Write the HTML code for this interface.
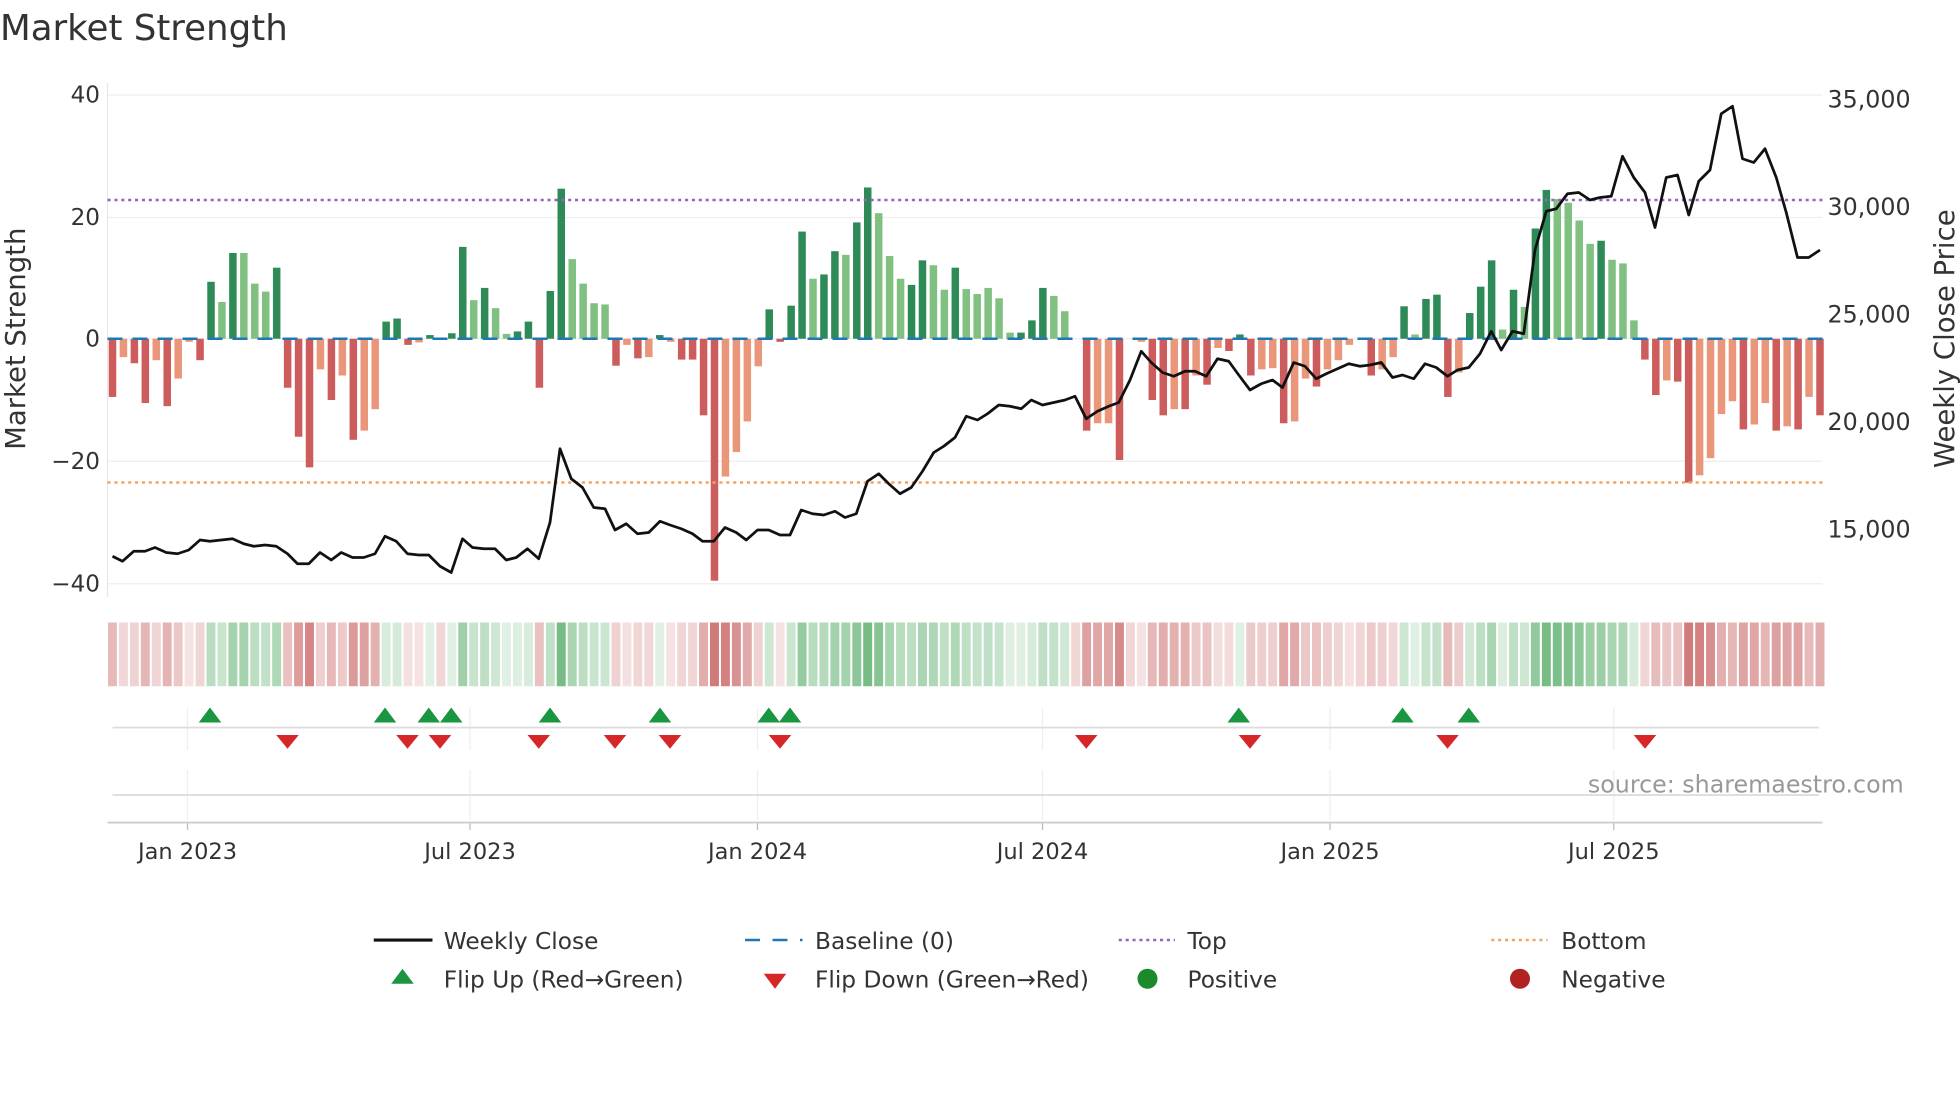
<!DOCTYPE html>
<html><head><meta charset="utf-8"><style>
html,body{margin:0;padding:0;background:#fff;width:1960px;height:1102px;overflow:hidden}
svg{display:block}
text{font-family:"DejaVu Sans","Liberation Sans",sans-serif;fill:#333}
</style></head><body>
<svg id="s" width="1960" height="1102" viewBox="0 0 1568 881.6" xmlns="http://www.w3.org/2000/svg">
<text x="0" y="32" font-size="28.5">Market Strength</text>
<g id="grid"></g>
<line x1="86" y1="66" x2="86" y2="478" stroke="#e6e6e6" stroke-width="1"/>
<g font-size="18.5" text-anchor="end">
<text x="80" y="82">40</text><text x="80" y="180">20</text><text x="80" y="277">0</text><text x="80" y="375">−20</text><text x="80" y="473">−40</text>
</g>
<g font-size="19" text-anchor="start">
<text x="1462" y="86">35,000</text><text x="1462" y="172">30,000</text><text x="1462" y="258">25,000</text><text x="1462" y="344">20,000</text><text x="1462" y="430">15,000</text>
</g>
<text font-size="22" text-anchor="middle" transform="translate(20,271) rotate(-90)">Market Strength</text>
<text font-size="22" text-anchor="middle" transform="translate(1563,271) rotate(-90)">Weekly Close Price</text>
<g id="bars"></g>
<line x1="86" y1="160" x2="1458" y2="160" stroke="#9467bd" stroke-width="2" stroke-dasharray="2.5,3"/>
<line x1="86" y1="386" x2="1458" y2="386" stroke="#f4a460" stroke-width="2" stroke-dasharray="2.5,3"/>
<line x1="86" y1="271" x2="1458" y2="271" stroke="#1f77b4" stroke-width="2" stroke-dasharray="12,8"/>
<polyline id="price" fill="none" stroke="#111" stroke-width="2.2" stroke-linejoin="round"/>
<g id="heat"></g>
<g id="vg" stroke="#eee" stroke-width="1"></g>
<line x1="90" y1="582" x2="1455" y2="582" stroke="#ddd" stroke-width="1.5"/>
<line x1="90" y1="636" x2="1455" y2="636" stroke="#ddd" stroke-width="1.5"/>
<line x1="86" y1="658" x2="1458" y2="658" stroke="#ccc" stroke-width="1.5"/>
<g id="mk"></g>
<text x="1523" y="634" font-size="19" text-anchor="end" style="fill:#999">source: sharemaestro.com</text>
<g font-size="18" text-anchor="middle">
<text x="150" y="687">Jan 2023</text><text x="376" y="687">Jul 2023</text><text x="606" y="687">Jan 2024</text><text x="834" y="687">Jul 2024</text><text x="1064" y="687">Jan 2025</text><text x="1291" y="687">Jul 2025</text>
</g>
<g font-size="18.6">
<line x1="299" y1="752" x2="346" y2="752" stroke="#111" stroke-width="2.5"/><text x="355" y="759">Weekly Close</text>
<line x1="596" y1="752" x2="642" y2="752" stroke="#1f77b4" stroke-width="2" stroke-dasharray="12,10"/><text x="652" y="759">Baseline (0)</text>
<line x1="895" y1="752" x2="940" y2="752" stroke="#9467bd" stroke-width="2" stroke-dasharray="2.5,3"/><text x="950" y="759">Top</text>
<line x1="1193" y1="752" x2="1238" y2="752" stroke="#f4a460" stroke-width="2" stroke-dasharray="2.5,3"/><text x="1249" y="759">Bottom</text>
<polygon points="313,787 322,775 331,787" fill="#1a9641"/><text x="355" y="790">Flip Up (Red→Green)</text>
<polygon points="611,779 629,779 620,791" fill="#d62728"/><text x="652" y="790">Flip Down (Green→Red)</text>
<circle cx="918" cy="783" r="8" fill="#1a8a2a"/><text x="950" y="790">Positive</text>
<circle cx="1216" cy="783" r="8" fill="#b22222"/><text x="1249" y="790">Negative</text>
</g>
</svg>
<script>
var NS="http://www.w3.org/2000/svg";
function el(t,a,p){var e=document.createElementNS(NS,t);for(var k in a)e.setAttribute(k,a[k]);document.getElementById(p).appendChild(e);return e;}
[76,174,271,369,467].forEach(function(y){el("line",{x1:86,y1:y,x2:1458,y2:y,stroke:"#eee","stroke-width":1},"grid")});
var B="-9.5d,-3l,-4d,-10.5d,-3.5l,-11d,-6.5l,-0.5l,-3.5d,9.3d,6l,14d,14l,9l,7.7l,11.6d,-8d,-16d,-21d,-5l,-10d,-6l,-16.5d,-15l,-11.5l,2.8d,3.3d,-1d,-0.6l,0.6d,0l,0.9d,15d,6.3l,8.3d,5l,0.8l,1.2d,2.8d,-8d,7.8d,24.5d,13l,9l,5.8l,5.6l,-4.4d,-1l,-3.2d,-3l,0.6d,-0.5l,-3.4d,-3.4d,-12.5d,-39.5d,-22.5l,-18.5l,-13.5l,-4.5l,4.8d,-0.5d,5.4d,17.5d,9.8l,10.5d,14.3d,13.7l,19d,24.7d,20.5l,13.5l,9.8l,8.8d,12.8d,12l,8l,11.6d,8.1l,7.3l,8.3l,6.6l,1l,1d,3d,8.3d,7l,4.5l,0l,-15d,-13.8l,-13.8l,-19.8d,0l,-0.5l,-10d,-12.5d,-11.5l,-11.5d,-6l,-7.5d,-1.5l,-2d,0.7d,-6d,-5l,-4.8l,-13.8d,-13.5l,-6.5l,-7.8d,-5l,-3.5l,-1l,0l,-6d,-5l,-3l,5.3d,0.7l,6.5d,7.2d,-9.5d,-5.5l,4.2d,8.5d,12.8d,1.5l,8d,5.2l,18d,24.3d,22.8l,22.2l,19.3l,15.5l,16d,12.9l,12.3l,3l,-3.4d,-9.2d,-6.8l,-7d,-23.5d,-22.3l,-19.5l,-12.3l,-10.2l,-14.8d,-14l,-10.5l,-15d,-14.3l,-14.8d,-9.5l,-12.5d".split(",");
var dx=(1456-90)/156;
B.forEach(function(s,i){var v=parseFloat(s),d=s.slice(-1)=="d",x=90+i*dx;
 var c=v>=0?(d?"#2e8b57":"#80c080"):(d?"#cd5c5c":"#e9967a");
 var y0=271,y1=271-v*4.9;
 if(Math.abs(v)>0.05)el("rect",{x:x-3,y:Math.min(y0,y1),width:6,height:Math.abs(y1-y0),fill:c},"bars");
 var m=Math.min(1,0.2+Math.abs(v)/30);
 var hc=v>0?"rgba(60,160,80,"+(m*0.7)+")":"rgba(190,70,70,"+(m*0.72)+")";
 if(v==0)hc="rgba(190,70,70,0.22)";
 el("rect",{x:x-3.6,y:498,width:dx-1.6,height:51,fill:hc},"heat");
});
var P="90:445,98:449,107:441,116:441,124:438,133:442,142:443,151:440,160:432,168:433,177:432,186:431,195:435,203:437,212:436,221:437,230:443,238:451,247:451,256:442,265:448,273:442,282:446,291:446,300:443,308:429,317:433,326:443,335:444,343:444,352:453,361:458,370:431,378:438,387:439,396:439,405:448,413:446,422:439,431:447,440:418,448:359,457:383,466:390,475:406,484:407,492:424,501:419,510:427,519:426,528:417,536:420,545:423,554:427,562:433,571:433,580:422,589:426,597:432,606:424,615:424,624:428,632:428,641:408,650:411,659:412,668:409,676:414,685:411,694:385,703:379,711:387,720:395,729:390,738:377,747:362,755:357,764:350,773:333,782:336,790:331,799:324,808:325,817:327,825:320,834:324,843:322,852:320,860:317,869:335,878:329,887:325,895:322,904:304,913:281,921:290,930:298,939:301,948:297,956:297,965:301,974:287,983:289,991:300,1000:312,1009:307,1018:304,1026:310,1035:290,1044:293,1053:303,1061:299,1070:295,1079:291,1088:293,1096:292,1105:290,1114:302,1122:300,1131:303,1140:291,1149:294,1158:301,1166:296,1175:294,1184:283,1193:265,1201:280,1210:265,1219:267,1228:200,1237:169,1245:167,1254:155,1263:154,1272:160,1280:158,1289:157,1298:125,1307:142,1316:154,1324:182,1333:142,1342:140,1351:172,1359:145,1368:136,1377:91,1386:85,1394:127,1403:130,1412:119,1421:142,1429:170,1438:206,1447:206,1456:200";
document.getElementById("price").setAttribute("points",P.replace(/:/g,","," ").split(",").join(" ").replace(/(\d+) (\d+)/g,"$1,$2"));
[150,376,606,834,1064,1291].forEach(function(x){el("line",{x1:x,y1:566,x2:x,y2:600},"vg");el("line",{x1:x,y1:616,x2:x,y2:656},"vg");el("line",{x1:x,y1:658,x2:x,y2:664,stroke:"#bbb"},"vg")});
[168,308,343,361,440,528,615,632,991,1122,1175].forEach(function(x){el("polygon",{points:(x-9)+",578 "+x+",566 "+(x+9)+",578",fill:"#1a9641"},"mk")});
[230,326,352,431,492,536,624,869,1000,1158,1316].forEach(function(x){el("polygon",{points:(x-9)+",588 "+(x+9)+",588 "+x+",599",fill:"#d62728"},"mk")});
</script>
</body></html>
